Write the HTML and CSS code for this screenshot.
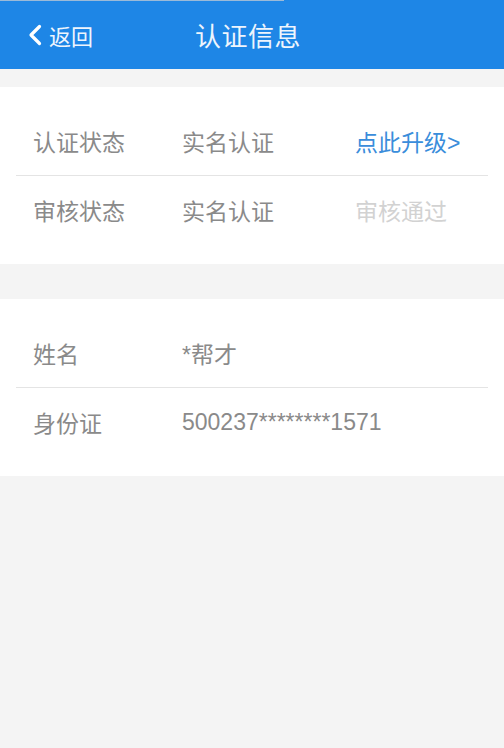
FILE: index.html
```html
<!DOCTYPE html>
<html lang="zh">
<head>
<meta charset="utf-8">
<title>认证信息</title>
<link rel="stylesheet" href="styles.css">
</head>
<body>
<div class="page">
  <header class="topbar">
    <div class="progress"></div>
    <div class="back">
      <svg class="chev" width="16" height="22" viewBox="0 0 16 22"><path d="M12.5 2.5 L4 11 L12.5 19.5" fill="none" stroke="#fff" stroke-width="3.2" stroke-linecap="round" stroke-linejoin="round"/></svg>
      <span>返回</span>
    </div>
    <h1 class="title">认证信息</h1>
  </header>

  <section class="card">
    <div class="row">
      <span class="label">认证状态</span>
      <span class="value">实名认证</span>
      <span class="extra link">点此升级&gt;</span>
    </div>
    <div class="row">
      <span class="label">审核状态</span>
      <span class="value">实名认证</span>
      <span class="extra muted">审核通过</span>
    </div>
  </section>

  <section class="card">
    <div class="row">
      <span class="label">姓名</span>
      <span class="value">*帮才</span>
    </div>
    <div class="row">
      <span class="label">身份证</span>
      <span class="value num">500237********1571</span>
    </div>
  </section>
</div>
</body>
</html>
```

FILE: styles.css
```css
html, body {
  margin: 0;
  padding: 0;
  background: #f4f4f4;
}
body {
  font-family: "Liberation Sans", "Noto Sans CJK SC", sans-serif;
  width: 504px;
  height: 748px;
  overflow: hidden;
}
.page {
  display: flex;
  flex-direction: column;
}
.topbar {
  height: 69px;
  background: #1e86e6;
  display: flex;
  align-items: center;
  position: relative;
  color: #fff;
}
.progress {
  position: absolute;
  left: 0;
  top: 0;
  width: 284px;
  height: 1px;
  background: #9bbad8;
}
.back {
  display: flex;
  align-items: center;
  gap: 6px;
  padding-left: 27px;
  font-size: 22px;
  color: #eef5fd;
}
.chev {
  display: block;
}
.title {
  margin: 0 0 0 102px;
  font-size: 26px;
  font-weight: normal;
  color: #eef5fd;
  letter-spacing: 0.5px;
}
.card {
  background: #fff;
  padding: 20px 16px;
  margin-top: 18px;
}
.card + .card {
  margin-top: 35px;
}
.row {
  height: 68px;
  display: flex;
  align-items: center;
  font-size: 23px;
  color: #8a8a8a;
}
.row + .row {
  border-top: 1.5px solid #e4e4e4;
}
.label {
  width: 149px;
  padding-left: 17px;
}
.value {
  width: 173px;
}
.num {
  width: auto;
}
.link {
  color: #3a8ddb;
}
.muted {
  color: #d2d2d2;
}
```
